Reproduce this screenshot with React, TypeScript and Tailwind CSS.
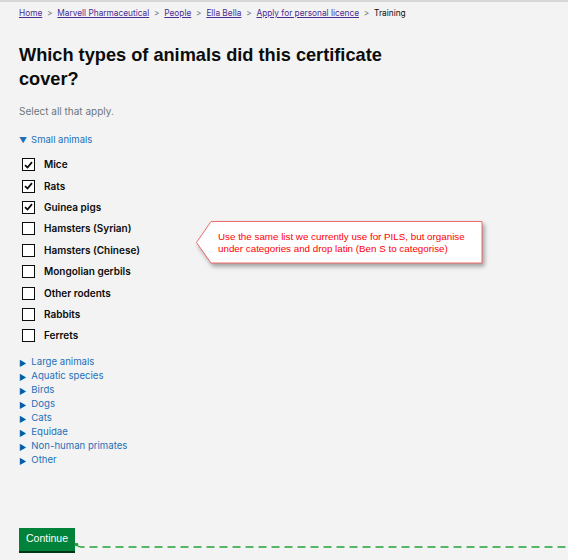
import React from 'react';

const smallAnimals = [
  { name: 'Mice', checked: true },
  { name: 'Rats', checked: true },
  { name: 'Guinea pigs', checked: true },
  { name: 'Hamsters (Syrian)', checked: false },
  { name: 'Hamsters (Chinese)', checked: false },
  { name: 'Mongolian gerbils', checked: false },
  { name: 'Other rodents', checked: false },
  { name: 'Rabbits', checked: false },
  { name: 'Ferrets', checked: false },
];

const otherGroups = [
  'Large animals',
  'Aquatic species',
  'Birds',
  'Dogs',
  'Cats',
  'Equidae',
  'Non-human primates',
  'Other',
];

const crumbs = ['Home', 'Marvell Pharmaceutical', 'People', 'Ella Bella', 'Apply for personal licence'];

export default function App() {
  return (
    <div
      className="relative w-[568px] h-[560px] overflow-hidden bg-[#f3f3f3] border-t-2 border-[#d6d6d6]"
      style={{ fontFamily: 'Inter, "Liberation Sans", sans-serif' }}
    >
      <div className="px-[19px]">
        {/* Breadcrumb */}
        <div className="flex items-center pt-[5px] text-[8.3px] leading-[12px]">
          {crumbs.map((c) => (
            <React.Fragment key={c}>
              <a className="text-[#4c2c92] underline">{c}</a>
              <span className="mx-[4.8px] text-[#6f777b]">&gt;</span>
            </React.Fragment>
          ))}
          <span className="text-[#0b0c0c]">Training</span>
        </div>

        {/* Heading */}
        <h1
          className="mt-[24px] w-[400px] text-[18.2px] leading-[24px] font-bold text-[#0b0c0c]"
          style={{ fontFamily: '"Liberation Sans", Arial, sans-serif' }}
        >
          Which types of animals did this certificate cover?
        </h1>

        <p className="mt-[14px] text-[10px] leading-[12px] text-[#6f777b]">Select all that apply.</p>

        {/* Expanded group */}
        <div className="mt-[17px] flex items-center gap-[4px] text-[9.5px] leading-[12px] text-[#1d70b8]">
          <span className="text-[8px]">▼</span>
          <span>Small animals</span>
        </div>

        <div className="mt-[12px] flex flex-col gap-[8px] pl-[3px]">
          {smallAnimals.map((a) => (
            <div key={a.name} className="flex items-center h-[13.4px]">
              <span className="flex items-center justify-center w-[13px] h-[13px] border-[1.5px] border-[#0b0c0c] bg-white">
                {a.checked && (
                  <svg width="9" height="8" viewBox="0 0 9 8">
                    <path d="M1 4.2 L3.5 6.5 L8 1.2" fill="none" stroke="#0b0c0c" strokeWidth="1.8" />
                  </svg>
                )}
              </span>
              <span className="ml-[9px] text-[10px] font-semibold text-[#0b0c0c]">{a.name}</span>
            </div>
          ))}
        </div>

        {/* Collapsed groups */}
        <div className="mt-[13px] flex flex-col">
          {otherGroups.map((g) => (
            <div key={g} className="flex items-center gap-[5px] h-[14px] text-[9.6px] text-[#1d70b8]">
              <span className="text-[8px] text-[#005ea5]">▶</span>
              <span>{g}</span>
            </div>
          ))}
        </div>

        {/* Continue */}
        <button
          className="mt-[60px] h-[23px] px-[7px] bg-[#00823b] text-white text-[10.5px] shadow-[0_2px_0_#003618]"
          style={{ fontFamily: '"Liberation Sans", Arial, sans-serif' }}
        >
          Continue
        </button>
      </div>

      {/* Annotation: dashed connector */}
      <svg className="absolute left-[74px] top-[539px]" width="494" height="10">
        <circle cx="2.5" cy="3.5" r="1.8" fill="#22a33a" />
        <path d="M3 4 Q4 6 7 6 L494 6" fill="none" stroke="#22a33a" strokeWidth="1.5" strokeDasharray="8 5" />
      </svg>

      {/* Annotation: callout */}
      <div className="absolute left-[195px] top-[218px] w-[290px] h-[46px]">
        <svg className="absolute inset-0" width="290" height="46" style={{ filter: 'drop-shadow(2px 3px 2px rgba(0,0,0,0.35))' }}>
          <polygon points="16,1.5 287,1.5 287,43 16,43 1.5,22.5" fill="#ffffff" stroke="#f06a6a" strokeWidth="1" />
        </svg>
        <div
          className="absolute left-[23px] top-[11px] text-[9.8px] leading-[11.5px] text-[#ff0000]"
          style={{ fontFamily: '"Liberation Sans", Arial, sans-serif' }}
        >
          Use the same list we currently use for PILS, but organise
          <br />
          under categories and drop latin (Ben S to categorise)
        </div>
      </div>
    </div>
  );
}
